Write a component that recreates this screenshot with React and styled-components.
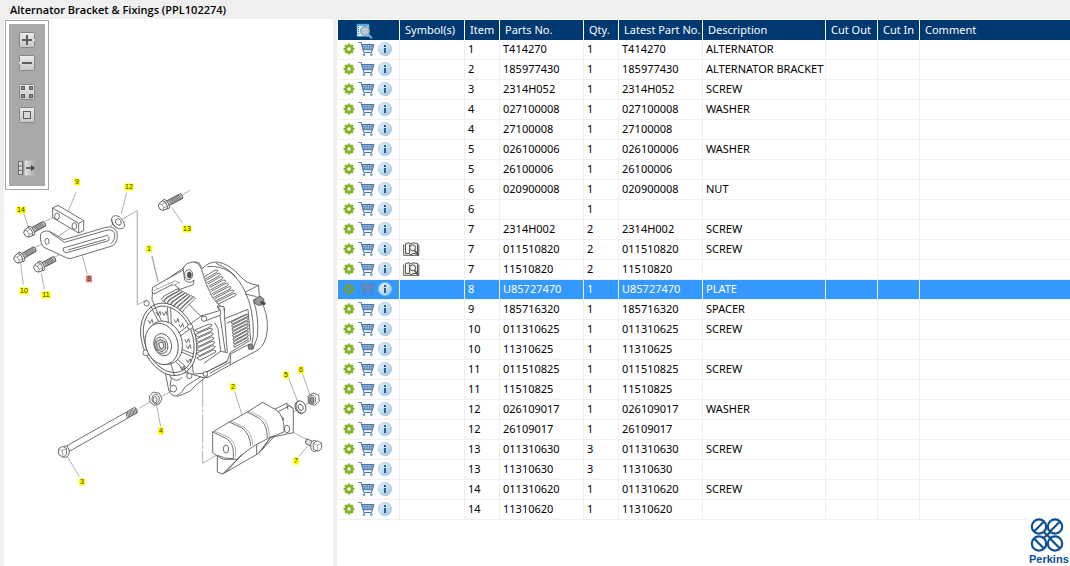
import React, {useState} from 'react'
import styled, {createGlobalStyle} from 'styled-components'

const GlobalStyle = createGlobalStyle`
  * {
    box-sizing: border-box;
  }

  body {
    margin: 0;
    background: #efefef;
    font-family: "Noto Sans", Tahoma, sans-serif;
    font-size: 11px;
    color: #000;
  }
`
const Page = styled('div')`
  display: flex;
  flex-direction: column;
  min-height: 100vh;
`
const Title = styled('h1')`
  margin: 0;
  padding: 0 10px;
  font-family: "Open Sans", "Noto Sans", sans-serif;
  font-size: 11px;
  font-weight: 600;
  line-height: 19px;
`
const Content = styled('main')`
  display: grid;
  grid-template-columns: 329px minmax(0, 1fr);
  gap: 4px;
  flex: 1;
  padding-left: 4px;
`
const DrawingPanel = styled('section')`
  position: relative;
  background: #fff;
`
const Drawing = styled('svg')`
  display: block;
  width: 100%;
  height: auto;
`
const Toolbar = styled('div')`
  position: absolute;
  top: 1px;
  left: 1px;
  padding: 3px;
  border: 1px solid #a6a6a6;
  background: #fff;
`
const ToolList = styled('div')`
  display: flex;
  flex-direction: column;
  align-items: center;
  width: 36px;
  height: 162px;
  padding: 7px 0;
  background: #a9a9a9;
`
const ToolButton = styled('button')`
  width: 20px;
  height: 18px;
  margin-top: ${({$gap}) => $gap || 0}px;
  padding: 0;
  border: none;
  background: none;
  line-height: 0;
  cursor: pointer;
`
const PartsPanel = styled('section')`
  position: relative;
  padding: 1px 0 0 1px;
  background: #fff;
`
const PartsTable = styled('table')`
  width: 100%;
  table-layout: fixed;
  border-collapse: separate;
  border-spacing: 0;
`
const Col = styled('col')`
  width: ${({$width}) => $width ? `${$width}px` : 'auto'};
`
const Th = styled('th')`
  height: 20px;
  padding: 0 0 0 5px;
  border-right: 1px solid #fff;
  background: #003871;
  color: #fff;
  font-weight: 400;
  line-height: 16px;
  text-align: ${({$center}) => $center ? 'center' : 'left'};
  white-space: nowrap;

  &:first-child {
    padding: 0 8px 0 0;
  }

  &:last-child {
    border-right: none;
  }
`
const Td = styled('td')`
  height: 20px;
  padding: 0 0 2px 3px;
  border-right: 1px solid #efefef;
  border-bottom: 1px solid #efefef;
  line-height: 16px;
  white-space: nowrap;

  &:last-child {
    border-right: none;
  }
`
const Tr = styled('tr')`
  background: ${({$selected}) => $selected ? '#3399ff' : '#fff'};
  color: ${({$selected}) => $selected ? '#fff' : '#000'};
  cursor: default;
`
const Actions = styled('div')`
  display: flex;
  align-items: center;
  gap: 3px;
  padding-left: 2px;
`
const IconButton = styled('button')`
  padding: 0;
  border: none;
  background: none;
  line-height: 0;
  vertical-align: middle;
  cursor: pointer;
`
const Logo = styled('div')`
  position: absolute;
  right: 0;
  bottom: 0;
  width: 43px;
  padding: 1px 0 0 2px;
  background: #fff;
  color: #0b4f94;
  font-family: "Liberation Sans", Arial, sans-serif;
  font-size: 11px;
  font-weight: 700;
  line-height: 13px;

  svg {
    display: block;
    margin-left: 1px;
  }
`

const GearIcon = ({dim}) => (
  <svg width="12" height="12" viewBox="0 0 12 12">
    <g fill={dim ? '#6f9f4a' : '#84b52b'}>
      {[0, 45, 90, 135].map(a => (
        <rect key={a} x="4.7" y="0.6" width="2.6" height="10.8" rx="0.5" transform={`rotate(${a} 6 6)`}/>
      ))}
      <circle cx="6" cy="6" r="4.2"/>
    </g>
    <circle cx="6" cy="6" r="1.7" fill={dim ? '#3d90dd' : '#fff'}/>
  </svg>
)

const CartIcon = ({dim}) => (
  <svg width="17" height="16" viewBox="0 0 17 16" fill="none" stroke={dim ? '#5b7fae' : '#4674a8'}>
    <path d="M0.5 1.5H3.2L5.8 11.4"/>
    <path d="M3.8 3.5H16L14.4 8.8H5.3Z" fill={dim ? '#6f9ad0' : '#b4cdea'}/>
    <path d="M4.3 5.4H15.4M4.8 7.2H14.8M6.7 3.5V8.8M9.2 3.5V8.8M11.7 3.5V8.8M13.8 3.5V8.5" strokeWidth="0.6"/>
    <path d="M14.4 8.8L13.6 11.5H5.8"/>
    <circle cx="6" cy="13.6" r="0.9"/>
    <circle cx="13.4" cy="13.6" r="0.9"/>
  </svg>
)

const InfoIcon = () => (
  <svg width="14" height="14" viewBox="0 0 14 14">
    <defs>
      <linearGradient id="info" x1="0" y1="0" x2="1" y2="1">
        <stop offset="0" stopColor="#e9f3fb"/>
        <stop offset="1" stopColor="#9fc6e6"/>
      </linearGradient>
    </defs>
    <circle cx="7" cy="7" r="6.5" fill="url(#info)" stroke="#9dbfda" strokeWidth="0.8"/>
    <rect x="6" y="3" width="2" height="2" fill="#2a5f98"/>
    <rect x="6" y="6" width="2" height="5" fill="#2a5f98"/>
  </svg>
)

const BookIcon = () => (
  <svg width="17" height="15" viewBox="0 0 17 15" fill="none" stroke="#55554d">
    <path d="M2.5 1.5L6 0.8L8 2L10 0.8L14.5 1.5V11.5H10L8 12.8L6 11.5H2.5Z" fill="#f6f5ee"/>
    <path d="M0.7 2.5V13.3H15.8V2.5M6.5 2.5V11"/>
    <circle cx="9.6" cy="5.8" r="3" fill="#e9ecea"/>
    <path d="M11.7 8.5L15.5 13.5" strokeWidth="1.8"/>
  </svg>
)

const SearchIcon = () => (
  <svg width="17" height="16" viewBox="0 0 17 16">
    <rect x="1" y="1" width="12" height="12.5" fill="#d9effb" stroke="#2e8ac4" strokeWidth="0.6"/>
    <path d="M1 2H13" stroke="#3aa0dc" strokeWidth="1.6"/>
    <path d="M2.5 4V12" stroke="#2e8ac4" strokeDasharray="1 1"/>
    <circle cx="9" cy="8" r="4.3" fill="#b9cbd7" stroke="#8299a9" strokeWidth="1.2"/>
    <path d="M12.2 11.4L15.8 15.2" stroke="#6bb4de" strokeWidth="2"/>
  </svg>
)

const ToolIcon = ({name}) => (
  <svg width="20" height="18" viewBox="0 0 20 18">
    <defs>
      <linearGradient id="key" x1="0" y1="0" x2="0" y2="1">
        <stop offset="0" stopColor="#ececec"/>
        <stop offset="1" stopColor="#c6c6c6"/>
      </linearGradient>
      <linearGradient id="fade" x1="0" y1="0" x2="1" y2="0">
        <stop offset="0" stopColor="#e8e8e8"/>
        <stop offset="1" stopColor="#a9a9a9"/>
      </linearGradient>
    </defs>
    {name !== 'panel' && <rect x="2.5" y="1.5" width="15" height="15" rx="1" fill="url(#key)" stroke="#858585"/>}
    {name === 'in' && <path d="M17 6.5L19.3 9L17 11.5" fill="#d8d8d8" stroke="#858585" strokeWidth="0.8"/>}
    {name === 'in' && <path d="M10 4V14M5 9H15" stroke="#5c5c5c" strokeWidth="2"/>}
    {name === 'out' && <path d="M3 6.5L0.7 9L3 11.5" fill="#d8d8d8" stroke="#858585" strokeWidth="0.8"/>}
    {name === 'out' && <path d="M5 9H15" stroke="#5c5c5c" strokeWidth="2"/>}
    {name === 'grid' && (
      <g fill="#8a8a8a" stroke="#5c5c5c">
        <rect x="4.5" y="3.5" width="3" height="3"/>
        <rect x="12.5" y="3.5" width="3" height="3"/>
        <rect x="4.5" y="11.5" width="3" height="3"/>
        <rect x="12.5" y="11.5" width="3" height="3"/>
      </g>
    )}
    {name === 'fit' && <rect x="6.5" y="5.5" width="7" height="7" fill="#d8d8d8" stroke="#5c5c5c"/>}
    {name === 'panel' && (
      <g>
        <rect x="6" y="1.5" width="13" height="15" fill="url(#fade)"/>
        <path d="M1.5 2.5H5.5V15.5H1.5ZM1.5 7H5.5M1.5 11.5H5.5" fill="#d6d6d6" stroke="#707070"/>
        <path d="M6.8 1.5V16.5" stroke="#707070"/>
        <path d="M9 9H15" stroke="#444" strokeWidth="1.5"/>
        <path d="M14 5.8L18 9L14 12.2Z" fill="#444"/>
      </g>
    )}
  </svg>
)

const callouts = [
  ['1', 149, 249], ['2', 233, 387], ['3', 82, 482], ['4', 161, 431], ['5', 286, 375],
  ['6', 301, 370], ['7', 296, 461], ['8', 89, 279], ['9', 77, 182], ['10', 24, 291],
  ['11', 46, 295], ['12', 129, 187], ['13', 187, 229], ['14', 21, 210],
]

const Callout = ({label, x, y, active}) => {
  const width = label.length > 1 ? 9 : 6
  return (
    <g>
      <rect x={x - width / 2} y={y - 3.5} width={width} height="7" fill={active ? '#f08080' : '#ffff00'}/>
      <text x={x} y={y + 2.4} fontSize="7" textAnchor="middle" fill="#33330a" fontFamily="Liberation Sans, Arial, sans-serif">
        {label}
      </text>
    </g>
  )
}

const Bolt = ({x, y, angle, length}) => (
  <g transform={`translate(${x} ${y}) rotate(${angle})`}>
    <path d={`M8 -8H${length}Q${length + 5} 0 ${length} 8H8Z`} fill="#bbb"/>
    {Array.from({length: Math.floor((length - 22) / 4)}, (_, i) => (
      <path key={i} d={`M${20 + i * 4} -8L${23 + i * 4} 8`} strokeWidth="1.6"/>
    ))}
    <ellipse cx="7" cy="0" rx="7" ry="16"/>
    <path d="M-10 -12L2 -14L8 -8V8L2 14L-10 12L-16 5V-6Z"/>
    <path d="M-10 -12L-4 -5V6L-10 12M-4 -5L8 -7M-4 6L8 7" strokeWidth="1.5"/>
  </g>
)

const Bracket = () => (
  <g transform="translate(0 170) scale(0.3333)">
    <g stroke="#888" strokeWidth="2">
      <path d="M228 68L205 122M380 68L364 132M72 132L84 168M457 258L474 334M262 312L247 256M70 344L62 280M133 358L124 310M548 160L515 112"/>
      <path d="M545 76L572 60M135 154L170 138M105 232L142 214M175 198L222 168M330 168L412 122M162 262L240 226"/>
      <path d="M412 122V404" stroke="#bbb" strokeWidth="4"/>
      <path d="M412 404L440 390"/>
    </g>
    <path d="M158 114L174 106L251 152V182L236 189L158 143Z"/>
    <path d="M158 114L236 160L251 152M236 160V189"/>
    <ellipse cx="171" cy="139" rx="7" ry="10"/>
    <ellipse cx="223" cy="168" rx="7" ry="10"/>
    <path d="M122 192Q130 180 148 184L192 209L318 172Q340 166 351 186Q356 218 336 228L214 265Q204 267 194 261L132 232Q118 216 122 192Z"/>
    <path d="M148 184Q152 190 194 217L322 180Q338 178 344 190Q346 210 332 222" fill="none"/>
    <path d="M190 234L322 196Q330 202 326 212L200 248Q188 248 190 234Z"/>
    <path d="M204 240L318 208"/>
    <ellipse cx="141" cy="214" rx="6" ry="9"/>
    <path d="M336 142Q346 132 360 142Q376 156 374 170Q364 182 348 172Q332 158 336 142Z"/>
    <path d="M334 148Q334 164 350 175" fill="none"/>
    <ellipse cx="355" cy="156" rx="8" ry="10" transform="rotate(-30 355 156)"/>
    <Bolt x={88} y={186} angle={-29} length={52}/>
    <Bolt x={58} y={264} angle={-30} length={54}/>
    <Bolt x={118} y={291} angle={-28} length={52}/>
    <Bolt x={492} y={106} angle={-28} length={60}/>
  </g>
)

const Alternator = () => (
  <g transform="translate(130 250) scale(0.3333)">
    {/* rear cover */}
    <path d="M218 56Q232 36 262 36Q300 42 332 80Q350 102 386 106L388 142Q416 190 412 240Q408 282 384 300L354 316L300 345L232 383L180 380L66 150L68 118L160 54Q184 30 206 38Z"/>
    <g fill="none">
      <path d="M232 50Q270 46 300 66Q330 90 346 126Q372 180 370 256Q368 284 358 300M258 40Q300 58 318 82"/>
      <path d="M346 126L386 106M346 132L380 140M370 150Q388 200 382 262L368 300M300 345L302 312L358 282M370 150L388 142"/>
    </g>
    {/* rear top vents */}
    {[0, 1, 2, 3, 4, 5, 6, 7].map(i => (
      <path
        key={i}
        d={`M${224 + i * 5} ${80 + i * 11}L${256 + i * 8} ${60 + i * 10}Q${268 + i * 8} ${60 + i * 10} ${260 + i * 8} ${67 + i * 10}L${226 + i * 5} ${87 + i * 11}`}
      />
    ))}
    {/* ear with the mounting hole */}
    <path d="M160 54Q166 38 190 36Q208 38 216 62Q230 110 246 140Q262 166 284 176L278 204L212 198Q160 150 144 118L158 96Z"/>
    <path d="M206 40Q218 60 222 84Q240 140 268 164" fill="none" stroke="#999"/>
    <ellipse cx="176" cy="74" rx="12" ry="15"/>
    <ellipse cx="178" cy="75" rx="6" ry="9" fill="#555"/>
    <path d="M66 126L68 112L160 60L164 90Q180 104 192 90L190 104L150 118L130 102L72 132Z"/>
    <path d="M72 122L128 96M132 92L150 98L124 108ZM76 110L84 118M112 96L120 102" stroke="#888" strokeWidth="2"/>
    {/* front top fins */}
    {[0, 1, 2, 3, 4, 5, 6].map(i => (
      <path
        key={i}
        d={`M${94 + i * 9} ${148 + i * 6}L${102 + i * 9} ${138 + i * 6}L${144 + i * 8} ${116 + i * 4}L${148 + i * 8} ${121 + i * 4}L${108 + i * 9} ${143 + i * 6}L${100 + i * 9} ${155 + i * 6}Z`}
      />
    ))}
    {/* centre body */}
    <path d="M176 226L214 198L268 182L262 168L282 170L284 206L354 178L362 270L300 308L292 334L222 370L190 372Z"/>
    <g fill="none">
      <path d="M214 198Q228 200 228 212L270 196M262 168Q276 180 270 196L274 224L286 306M284 206L292 308M254 218L264 236L272 304L292 308"/>
      <path d="M272 304L222 340M222 370L292 334M232 383L228 368M290 220L350 192M240 370L300 336"/>
    </g>
    {[0, 1, 2, 3, 4, 5, 6].map(i => (
      <path key={i} d={`M${194 + i} ${240 + i * 14}L${238 + i * 2} ${222 + i * 13}Q${250 + i * 2} ${223 + i * 13} ${244 + i * 2} ${229 + i * 13}L${204 + i} ${247 + i * 14}Z`}/>
    ))}
    {[0, 1, 2, 3, 4, 5, 6, 7].map(i => (
      <path key={i} d={`M${304 + i} ${216 + i * 10}L${350} ${194 + i * 10}Q358 ${192 + i * 10} 354 ${199 + i * 10}L${306 + i} ${222 + i * 10}Z`}/>
    ))}
    <circle cx="222" cy="206" r="8"/>
    <path d="M376 146L390 138L402 148L400 164L384 166L372 158Z" fill="#999"/>
    <path d="M392 156L406 162" strokeWidth="8"/>
    <circle cx="362" cy="290" r="8" fill="#888"/>
    {/* foot */}
    <path d="M104 358L116 420Q122 440 146 438L180 424Q196 404 224 384L176 370Z"/>
    <path d="M124 382Q140 400 156 382M140 438Q158 428 166 410L212 380M112 362L124 386L120 408" fill="none"/>
    <circle cx="130" cy="416" r="10"/>
    {/* front frame and pulley */}
    <ellipse cx="116" cy="268" rx="80" ry="112" transform="rotate(-20 116 268)"/>
    <ellipse cx="116" cy="268" rx="72" ry="103" transform="rotate(-20 116 268)"/>
    <path d="M62 168L90 224M72 164L98 220M170 230L140 254M178 238L146 262M112 172L116 228M122 174L124 232M190 312L150 296M192 322L150 304M168 364L136 334M176 358L142 328M134 378L122 340"/>
    {[[84, 186], [102, 186], [60, 210], [138, 208], [152, 222], [170, 268], [174, 286], [174, 328], [156, 350]].map(([x, y]) => (
      <path key={`${x}-${y}`} d={`M${x - 6} ${y}L${x} ${y + 10}L${x + 6} ${y - 2}L${x + 9} ${y + 10}`} fill="none"/>
    ))}
    <circle cx="50" cy="160" r="8"/>
    <circle cx="180" cy="230" r="8"/>
    <circle cx="48" cy="308" r="9"/>
    <circle cx="178" cy="378" r="8"/>
    <circle cx="226" cy="372" r="7"/>
    <ellipse cx="104" cy="278" rx="52" ry="66" transform="rotate(-18 104 278)"/>
    <ellipse cx="95" cy="282" rx="48" ry="63" transform="rotate(-18 95 282)"/>
    <ellipse cx="98" cy="284" rx="26" ry="34" transform="rotate(-18 98 284)"/>
    <ellipse cx="94" cy="286" rx="19" ry="25" transform="rotate(-18 94 286)"/>
    <path d="M78 276L90 268L106 276L108 296L96 306L82 298Z" fill="#ccc"/>
    <path d="M86 280L98 276L102 292L92 298Z"/>
    <path d="M65 18L84 96" stroke="#999" strokeWidth="2"/>
  </g>
)

const LowerParts = () => (
  <g transform="translate(40 340) scale(0.3333)">
    <g stroke="#888" strokeWidth="2">
      <path d="M82 350L118 410M350 196L362 260M584 154L606 224M746 116L774 186M788 102L810 164M804 318L776 350"/>
      <path d="M298 204L330 186M364 170L396 152M735 232L810 186M742 268L800 298M488 370L556 330"/>
      <path d="M488 116V370" strokeDasharray="86 6 10 6"/>
    </g>
    {/* long bolt */}
    <path d="M80 318L284 202Q294 206 292 218L88 334Z"/>
    {[0, 1, 2, 3, 4, 5, 6, 7].map(i => (
      <path key={i} d={`M${258 + i * 4} ${218 - i * 2}L${262 + i * 4} ${234 - i * 2}`} strokeWidth="2.5"/>
    ))}
    <ellipse cx="76" cy="335" rx="12" ry="17"/>
    <path d="M56 326L68 319L80 326V342L70 352L56 344Z"/>
    <path d="M56 326L66 332L80 326M66 332L70 352" strokeWidth="1.5"/>
    {/* spacer */}
    <path d="M328 168L340 156L358 160L366 176L358 192L342 196L330 186Z"/>
    <ellipse cx="347" cy="177" rx="11" ry="14"/>
    <ellipse cx="345" cy="179" rx="6" ry="9"/>
    {/* alternator bracket */}
    <path d="M700 210L740 190L760 206V278L694 292L732 236Z"/>
    <path d="M712 216L748 198L760 206M740 190L744 208"/>
    <path d="M518 276L568 246L622 216L668 187L712 212Q732 232 732 262V276L692 292L656 340L548 402L532 396V348L518 338Z"/>
    <g fill="none">
      <path d="M518 276L560 296Q580 312 580 334V356Q558 358 532 346M568 246L606 264Q630 282 632 318M622 216L660 236Q682 254 682 294"/>
      <path d="M524 274L564 291Q587 308 587 334V350M574 244L612 261Q637 280 638 314M628 214L666 232Q689 250 688 290" stroke="#999"/>
      <path d="M532 348L550 358H592L604 346L638 320L694 290M548 402L604 346M556 398L610 340M656 340L694 290M650 314V342M666 330L706 286"/>
    </g>
    <ellipse cx="558" cy="327" rx="8" ry="12"/>
    <ellipse cx="741" cy="267" rx="8" ry="11"/>
    {/* washer, nut and short bolt */}
    <ellipse cx="780" cy="202" rx="14" ry="19" transform="rotate(-24 780 202)"/>
    <ellipse cx="783" cy="201" rx="14" ry="19" transform="rotate(-24 783 201)"/>
    <ellipse cx="782" cy="202" rx="7" ry="10" transform="rotate(-24 782 202)"/>
    <path d="M804 168L820 159L836 166L838 184L824 196L806 190Z"/>
    <ellipse cx="817" cy="179" rx="10" ry="13"/>
    <ellipse cx="816" cy="180" rx="6" ry="9" fill="#999"/>
    <path d="M800 296L818 304L814 320L796 310Z" fill="#ddd"/>
    <ellipse cx="823" cy="318" rx="11" ry="17"/>
    <path d="M820 310L832 302L845 310V326L834 334L820 328Z"/>
    <path d="M820 310L832 316L845 310M832 316L834 334" strokeWidth="1.5"/>
  </g>
)

const LogoMark = () => (
  <svg width="34" height="36" viewBox="0 0 34 36" fill="none" stroke="#0b4f94" strokeWidth="2.2">
    {[[9, 9.5, 1], [25, 9.5, 1], [9, 26.5, -1], [25, 26.5, -1]].map(([x, y, k]) => (
      <g key={`${x}-${y}`}>
        <circle cx={x} cy={y} r="7.2"/>
        <path d={`M${x - 5} ${y + 5 * k}L${x + 5} ${y - 5 * k}`}/>
      </g>
    ))}
    <path d="M13 14.5L21 21.5M21 14.5L13 21.5"/>
  </svg>
)

const columns = [
  ['Symbol(s)', 65], ['Item', 35], ['Parts No.', 84], ['Qty.', 35], ['Latest Part No.', 84],
  ['Description', 123], ['Cut Out', 52], ['Cut In', 42], ['Comment', 0],
]

const parts = [
  ['1', 'T414270', '1', 'ALTERNATOR'],
  ['2', '185977430', '1', 'ALTERNATOR BRACKET'],
  ['3', '2314H052', '1', 'SCREW'],
  ['4', '027100008', '1', 'WASHER'],
  ['4', '27100008', '1', ''],
  ['5', '026100006', '1', 'WASHER'],
  ['5', '26100006', '1', ''],
  ['6', '020900008', '1', 'NUT'],
  ['6', '', '1', ''],
  ['7', '2314H002', '2', 'SCREW'],
  ['7', '011510820', '2', 'SCREW', true],
  ['7', '11510820', '2', '', true],
  ['8', 'U85727470', '1', 'PLATE'],
  ['9', '185716320', '1', 'SPACER'],
  ['10', '011310625', '1', 'SCREW'],
  ['10', '11310625', '1', ''],
  ['11', '011510825', '1', 'SCREW'],
  ['11', '11510825', '1', ''],
  ['12', '026109017', '1', 'WASHER'],
  ['12', '26109017', '1', ''],
  ['13', '011310630', '3', 'SCREW'],
  ['13', '11310630', '3', ''],
  ['14', '011310620', '1', 'SCREW'],
  ['14', '11310620', '1', ''],
]

const tools = [
  ['in', 'Zoom in', 0], ['out', 'Zoom out', 5], ['grid', 'Show all', 11],
  ['fit', 'Fit to window', 5], ['panel', 'Toggle panel', 35],
]

const App = () => {
  const [selected, setSelected] = useState(12)

  return (
    <Page>
      <GlobalStyle/>
      <Title>Alternator Bracket &amp; Fixings (PPL102274)</Title>
      <Content>
        <DrawingPanel>
          <Drawing viewBox="4 19 329 547" fill="none">
            <g fill="#fff" stroke="#4a4a4a" strokeWidth="2.4" strokeLinejoin="round">
              <Bracket/>
              <Alternator/>
              <LowerParts/>
            </g>
            {callouts.map(([label, x, y]) => (
              <Callout key={label} label={label} x={x} y={y} active={parts[selected][0] === label}/>
            ))}
          </Drawing>
          <Toolbar>
            <ToolList>
              {tools.map(([name, label, gap]) => (
                <ToolButton key={name} type="button" aria-label={label} $gap={gap}>
                  <ToolIcon name={name}/>
                </ToolButton>
              ))}
            </ToolList>
          </Toolbar>
        </DrawingPanel>
        <PartsPanel>
          <PartsTable>
            <colgroup>
              <Col $width={62}/>
              {columns.map(([name, width]) => <Col key={name} $width={width}/>)}
            </colgroup>
            <thead>
              <tr>
                <Th $center>
                  <IconButton type="button" aria-label="Search parts"><SearchIcon/></IconButton>
                </Th>
                {columns.map(([name]) => <Th key={name}>{name}</Th>)}
              </tr>
            </thead>
            <tbody>
              {parts.map(([item, number, qty, description, hasSymbol], i) => (
                <Tr key={i} $selected={i === selected} onClick={() => setSelected(i)}>
                  <Td>
                    <Actions>
                      <IconButton type="button" aria-label="Options"><GearIcon dim={i === selected}/></IconButton>
                      <IconButton type="button" aria-label="Add to cart"><CartIcon dim={i === selected}/></IconButton>
                      <IconButton type="button" aria-label="Part info"><InfoIcon/></IconButton>
                    </Actions>
                  </Td>
                  <Td>{hasSymbol && <IconButton type="button" aria-label="View note"><BookIcon/></IconButton>}</Td>
                  <Td>{item}</Td>
                  <Td>{number}</Td>
                  <Td>{qty}</Td>
                  <Td>{number}</Td>
                  <Td>{description}</Td>
                  <Td/>
                  <Td/>
                  <Td/>
                </Tr>
              ))}
            </tbody>
          </PartsTable>
          <Logo>
            <LogoMark/>
            Perkins
          </Logo>
        </PartsPanel>
      </Content>
    </Page>
  )
}

export default App
